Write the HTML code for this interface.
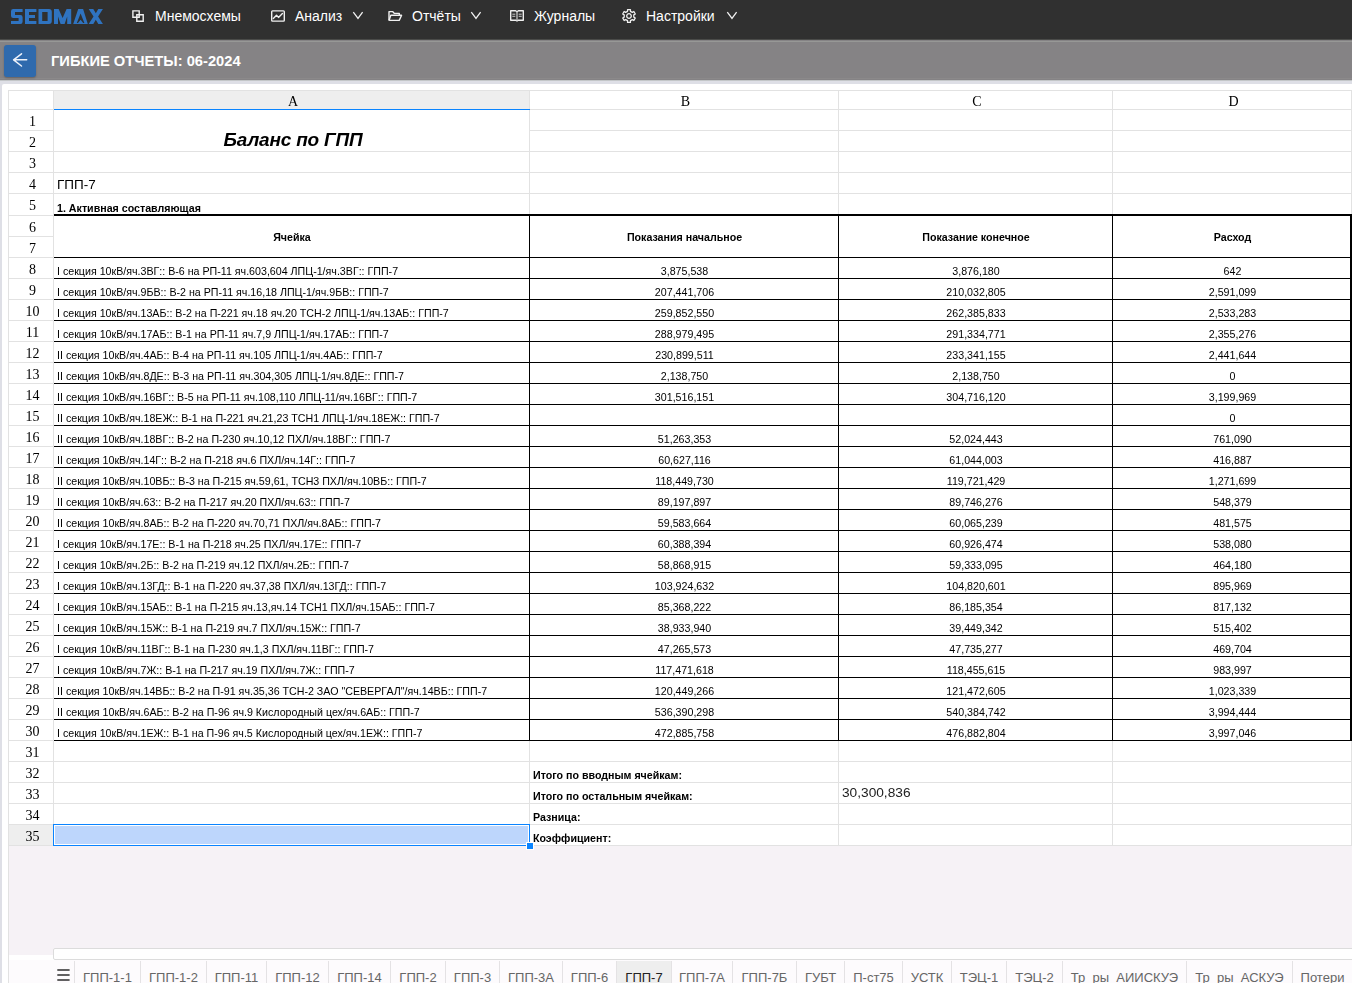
<!DOCTYPE html>
<html><head><meta charset="utf-8">
<style>
html,body{margin:0;padding:0}
body{width:1352px;height:983px;overflow:hidden;position:relative;background:#dedfe6;font-family:"Liberation Sans",sans-serif}
.nav{position:absolute;left:0;top:0;width:1352px;height:39px;background:#303030}
.nav .it{position:absolute;top:0;height:39px;line-height:33px;color:#fff;font-size:14px;white-space:nowrap}
.nav svg{position:absolute}
.tbar{position:absolute;left:0;top:39px;width:1352px;height:41px;background:#858385}
.tbar .hi{position:absolute;left:0;top:2px;width:100%;height:1px;background:#979896}
.tbar .sh{position:absolute;left:0;top:0;width:100%;height:1px;background:#4a4b49}
.tbar .lo{position:absolute;left:0;top:39px;width:100%;height:1px;background:#8b898a}
.tr{position:absolute;left:0;top:80px;width:1352px;height:1px;background:#c3c6c8}
.back{position:absolute;left:4px;top:45px;width:32px;height:32px;background:#2f6aad;border-radius:3px;box-shadow:0 1px 2px rgba(0,0,0,.25)}
.ttl{position:absolute;left:51px;top:41px;height:40px;line-height:41px;color:#fff;font-weight:bold;font-size:14.7px;white-space:nowrap}
.card{position:absolute;left:2px;top:84px;width:1360px;height:920px;background:#fff;border-radius:2px}
.body{position:absolute;left:9px;top:846px;width:1343px;height:109px;background:#f6f2f6}
.gw{position:absolute;left:0;top:0;width:1352px;height:983px;will-change:transform}
.hl{position:absolute;height:1px;background:#e2e2e2}
.vl{position:absolute;width:1px;background:#e2e2e2}
.bk{position:absolute;background:#000}
.ch{position:absolute;top:90px;height:20px;line-height:23px;text-align:center;font-family:"Liberation Serif",serif;font-size:14px;color:#000}
.rn{position:absolute;left:10px;width:45px;text-align:center;font-family:"Liberation Serif",serif;font-size:14px;color:#000;line-height:25px}
.t{position:absolute;font-size:10.66px;height:20px;line-height:20px;color:#000;white-space:nowrap}
.t.b{font-weight:bold}
.t.c{text-align:center;margin-left:1px}
.t.mid{text-align:center;margin-left:1px}
.title{position:absolute;height:26px;line-height:26px;text-align:center;font-size:19px;font-weight:bold;font-style:italic;white-space:nowrap}
.gpp{position:absolute;height:20px;line-height:18px;font-size:13.5px;white-space:nowrap}
.num2{position:absolute;height:20px;line-height:14px;font-size:13.7px;color:#222;white-space:nowrap}
.tabs{position:absolute;left:9px;top:960px;width:1343px;height:23px;background:#fdfbfd}
.sb{position:absolute;left:53px;top:948px;width:1310px;height:10px;background:#fff;border:1px solid #dcdcdc;border-radius:2px}
.tab{position:absolute;top:961px;height:30px;line-height:34px;text-align:center;font-size:13px;color:#666;border-left:1px solid #e4e2e4;box-sizing:border-box;white-space:nowrap}
.tab.act{background:#eeeeee;color:#222}
</style></head><body>
<div class="nav">
  <svg style="left:0;top:0" width="760" height="39" viewBox="0 0 760 39">
    <g fill="#2f73c0">
      <path d="M13.2 9H22.6V12H15V15H20.4Q22.6 15 22.6 17.2V21.8Q22.6 24 20.4 24H11V21H18.6V18H13.2Q11 18 11 15.8V11.2Q11 9 13.2 9Z"/>
      <path d="M25 9H36.4V12H29V15H35V18H29V21H36.4V24H25Z"/>
      <path d="M38.5 9H49Q51.8 9 51.8 12V21Q51.8 24 49 24H38.5ZM42.2 12V21H47.6V12Z" fill-rule="evenodd"/>
      <path d="M54 9H58.6L62.6 18L66.6 9H71.2V24H67.2V16.5L64.6 24H60.6L58 16.5V24H54Z"/>
      <path d="M73.2 24L78.2 9H83.1L87.8 24ZM80.6 13.4L76.8 23H78L80.6 19.8L83.2 23H84.4Z" fill-rule="evenodd"/>
      <path d="M88.7 9H93.3L95.8 13.3L98.3 9H102.9L98.1 16.5L102.9 24H98.3L95.8 19.7L93.3 24H88.7L93.5 16.5Z"/>
    </g>
    <g fill="none" stroke="#f0f0f0" stroke-width="1.4">
      <path d="M132.9 10.9H139.2V17.3H132.9Z"/>
      <path d="M136.8 14.7H143.2V21.2H136.8Z"/>
      <rect x="271.7" y="10.9" width="12.6" height="10.2" rx="0.8"/>
      <path d="M273.3 18.5L276.5 15.2L278.5 17.4L282.4 13.5" stroke-linecap="round" stroke-linejoin="round"/>
      <path d="M353.3 12.1L358 18.4L362.6 12.1" stroke-width="1.3"/>
      <path d="M471.3 12.1L476 18.4L480.6 12.1" stroke-width="1.3"/>
      <path d="M727.3 12.1L732 18.4L736.6 12.1" stroke-width="1.3"/>
      <path d="M389 20.4V11.6H392.6L394.4 13.4H399.3V15.3" stroke-linejoin="round"/>
      <path d="M389 20.4H399.2L401.6 15.3H390.8L389 20.4" stroke-linejoin="round"/>
      <path d="M510.7 10.8H515.6L517 11.8L518.4 10.8H523.3V20.2H518.4L517 21L515.6 20.2H510.7Z" stroke-linejoin="round"/>
      <path d="M517 11.8V20.6" stroke="#bbb"/>
      <path d="M512.3 14.2H515.3M512.3 16.3H515.3M518.7 14.2H521.7M518.7 16.3H521.7" stroke-width="1" stroke="#ccc"/>
    </g>
    <g transform="translate(629 16)" fill="none" stroke="#f0f0f0" stroke-width="1.3" stroke-linejoin="round">
      <path d="M-1.45 -4.68 L-1.44 -6.44 L1.44 -6.44 L1.45 -4.68 L3.33 -3.59 L4.86 -4.47 L6.30 -1.97 L4.78 -1.09 L4.78 1.09 L6.30 1.97 L4.86 4.47 L3.33 3.59 L1.45 4.68 L1.44 6.44 L-1.44 6.44 L-1.45 4.68 L-3.33 3.59 L-4.86 4.47 L-6.30 1.97 L-4.78 1.09 L-4.78 -1.09 L-6.30 -1.97 L-4.86 -4.47 L-3.33 -3.59Z"/>
      <circle r="2.3"/>
    </g>
  </svg>
  <div class="it" style="left:155px">Мнемосхемы</div>
  <div class="it" style="left:295px">Анализ</div>
  <div class="it" style="left:412px">Отчёты</div>
  <div class="it" style="left:534px">Журналы</div>
  <div class="it" style="left:646px">Настройки</div>
</div>
<div class="tbar"><div class="sh"></div><div class="hi"></div><div class="lo"></div></div><div class="tr"></div>
<div class="back"><svg width="32" height="32" viewBox="0 0 32 32" style="position:absolute;left:0;top:0"><path d="M17.5 8.8L9.6 14.8L17.5 21M9.9 14.8H22.7" fill="none" stroke="#eef2fa" stroke-width="1.5" stroke-linecap="round" stroke-linejoin="round"/></svg></div>
<div class="ttl">ГИБКИЕ ОТЧЕТЫ: 06-2024</div>
<div class="card"></div>
<div class="body"></div>
<div class="gw">
<div class="hl" style="top:90px;left:8px;width:1344px"></div>
<div class="hl" style="top:109px;left:8px;width:1344px"></div>
<div class="hl" style="top:130px;left:8px;width:1344px"></div>
<div class="hl" style="top:151px;left:8px;width:1344px"></div>
<div class="hl" style="top:172px;left:8px;width:1344px"></div>
<div class="hl" style="top:193px;left:8px;width:1344px"></div>
<div class="hl" style="top:215px;left:8px;width:1344px"></div>
<div class="hl" style="top:236px;left:8px;width:1344px"></div>
<div class="hl" style="top:257px;left:8px;width:1344px"></div>
<div class="hl" style="top:278px;left:8px;width:1344px"></div>
<div class="hl" style="top:299px;left:8px;width:1344px"></div>
<div class="hl" style="top:320px;left:8px;width:1344px"></div>
<div class="hl" style="top:341px;left:8px;width:1344px"></div>
<div class="hl" style="top:362px;left:8px;width:1344px"></div>
<div class="hl" style="top:383px;left:8px;width:1344px"></div>
<div class="hl" style="top:404px;left:8px;width:1344px"></div>
<div class="hl" style="top:425px;left:8px;width:1344px"></div>
<div class="hl" style="top:446px;left:8px;width:1344px"></div>
<div class="hl" style="top:467px;left:8px;width:1344px"></div>
<div class="hl" style="top:488px;left:8px;width:1344px"></div>
<div class="hl" style="top:509px;left:8px;width:1344px"></div>
<div class="hl" style="top:530px;left:8px;width:1344px"></div>
<div class="hl" style="top:551px;left:8px;width:1344px"></div>
<div class="hl" style="top:572px;left:8px;width:1344px"></div>
<div class="hl" style="top:593px;left:8px;width:1344px"></div>
<div class="hl" style="top:614px;left:8px;width:1344px"></div>
<div class="hl" style="top:635px;left:8px;width:1344px"></div>
<div class="hl" style="top:656px;left:8px;width:1344px"></div>
<div class="hl" style="top:677px;left:8px;width:1344px"></div>
<div class="hl" style="top:698px;left:8px;width:1344px"></div>
<div class="hl" style="top:719px;left:8px;width:1344px"></div>
<div class="hl" style="top:740px;left:8px;width:1344px"></div>
<div class="hl" style="top:761px;left:8px;width:1344px"></div>
<div class="hl" style="top:782px;left:8px;width:1344px"></div>
<div class="hl" style="top:803px;left:8px;width:1344px"></div>
<div class="hl" style="top:824px;left:8px;width:1344px"></div>
<div class="hl" style="top:845px;left:8px;width:1344px"></div>
<div class="vl" style="left:8px;top:90px;height:893px"></div>
<div class="vl" style="left:53px;top:90px;height:756px"></div>
<div class="vl" style="left:529px;top:90px;height:756px"></div>
<div class="vl" style="left:838px;top:90px;height:756px"></div>
<div class="vl" style="left:1112px;top:90px;height:756px"></div>
<div class="vl" style="left:1351px;top:90px;height:756px"></div>
<div style="position:absolute;left:54px;top:91px;width:475px;height:18px;background:#eeeeee"></div>
<div style="position:absolute;left:54px;top:109px;width:476px;height:1px;background:#0a84ff"></div>
<div style="position:absolute;left:9px;top:825px;width:44px;height:20px;background:#eeeeee"></div>
<div class="ch" style="left:55px;width:476px">A</div>
<div class="ch" style="left:531px;width:309px">B</div>
<div class="ch" style="left:840px;width:274px">C</div>
<div class="ch" style="left:1114px;width:239px">D</div>
<div class="rn" style="top:109px;height:21px">1</div>
<div class="rn" style="top:130px;height:21px">2</div>
<div class="rn" style="top:151px;height:21px">3</div>
<div class="rn" style="top:172px;height:21px">4</div>
<div class="rn" style="top:193px;height:22px">5</div>
<div class="rn" style="top:215px;height:21px">6</div>
<div class="rn" style="top:236px;height:21px">7</div>
<div class="rn" style="top:257px;height:21px">8</div>
<div class="rn" style="top:278px;height:21px">9</div>
<div class="rn" style="top:299px;height:21px">10</div>
<div class="rn" style="top:320px;height:21px">11</div>
<div class="rn" style="top:341px;height:21px">12</div>
<div class="rn" style="top:362px;height:21px">13</div>
<div class="rn" style="top:383px;height:21px">14</div>
<div class="rn" style="top:404px;height:21px">15</div>
<div class="rn" style="top:425px;height:21px">16</div>
<div class="rn" style="top:446px;height:21px">17</div>
<div class="rn" style="top:467px;height:21px">18</div>
<div class="rn" style="top:488px;height:21px">19</div>
<div class="rn" style="top:509px;height:21px">20</div>
<div class="rn" style="top:530px;height:21px">21</div>
<div class="rn" style="top:551px;height:21px">22</div>
<div class="rn" style="top:572px;height:21px">23</div>
<div class="rn" style="top:593px;height:21px">24</div>
<div class="rn" style="top:614px;height:21px">25</div>
<div class="rn" style="top:635px;height:21px">26</div>
<div class="rn" style="top:656px;height:21px">27</div>
<div class="rn" style="top:677px;height:21px">28</div>
<div class="rn" style="top:698px;height:21px">29</div>
<div class="rn" style="top:719px;height:21px">30</div>
<div class="rn" style="top:740px;height:21px">31</div>
<div class="rn" style="top:761px;height:21px">32</div>
<div class="rn" style="top:782px;height:21px">33</div>
<div class="rn" style="top:803px;height:21px">34</div>
<div class="rn" style="top:824px;height:21px">35</div>
<div style="position:absolute;left:54px;top:130px;width:475px;height:1px;background:#fff"></div>
<div style="position:absolute;left:54px;top:236px;width:475px;height:1px;background:#fff"></div>
<div style="position:absolute;left:530px;top:236px;width:308px;height:1px;background:#fff"></div>
<div style="position:absolute;left:839px;top:236px;width:273px;height:1px;background:#fff"></div>
<div style="position:absolute;left:1113px;top:236px;width:238px;height:1px;background:#fff"></div>
<div class="bk" style="left:54px;top:214px;width:1299px;height:2px"></div>
<div class="bk" style="left:54px;top:257px;width:1298px;height:1px"></div>
<div class="bk" style="left:54px;top:278px;width:1298px;height:1px"></div>
<div class="bk" style="left:54px;top:299px;width:1298px;height:1px"></div>
<div class="bk" style="left:54px;top:320px;width:1298px;height:1px"></div>
<div class="bk" style="left:54px;top:341px;width:1298px;height:1px"></div>
<div class="bk" style="left:54px;top:362px;width:1298px;height:1px"></div>
<div class="bk" style="left:54px;top:383px;width:1298px;height:1px"></div>
<div class="bk" style="left:54px;top:404px;width:1298px;height:1px"></div>
<div class="bk" style="left:54px;top:425px;width:1298px;height:1px"></div>
<div class="bk" style="left:54px;top:446px;width:1298px;height:1px"></div>
<div class="bk" style="left:54px;top:467px;width:1298px;height:1px"></div>
<div class="bk" style="left:54px;top:488px;width:1298px;height:1px"></div>
<div class="bk" style="left:54px;top:509px;width:1298px;height:1px"></div>
<div class="bk" style="left:54px;top:530px;width:1298px;height:1px"></div>
<div class="bk" style="left:54px;top:551px;width:1298px;height:1px"></div>
<div class="bk" style="left:54px;top:572px;width:1298px;height:1px"></div>
<div class="bk" style="left:54px;top:593px;width:1298px;height:1px"></div>
<div class="bk" style="left:54px;top:614px;width:1298px;height:1px"></div>
<div class="bk" style="left:54px;top:635px;width:1298px;height:1px"></div>
<div class="bk" style="left:54px;top:656px;width:1298px;height:1px"></div>
<div class="bk" style="left:54px;top:677px;width:1298px;height:1px"></div>
<div class="bk" style="left:54px;top:698px;width:1298px;height:1px"></div>
<div class="bk" style="left:54px;top:719px;width:1298px;height:1px"></div>
<div class="bk" style="left:54px;top:740px;width:1298px;height:1px"></div>
<div class="bk" style="left:529px;top:214px;width:1px;height:527px"></div>
<div class="bk" style="left:838px;top:214px;width:1px;height:527px"></div>
<div class="bk" style="left:1112px;top:214px;width:1px;height:527px"></div>
<div class="bk" style="left:1350px;top:214px;width:2px;height:527px"></div>
<div class="title" style="left:53px;width:476px;top:127px;margin-left:2px;letter-spacing:-0.2px">Баланс по ГПП</div>
<div class="gpp" style="left:57px;top:176px">ГПП-7</div>
<div class="t b" style="left:57px;top:198px">1. Активная составляющая</div>
<div class="t b mid" style="left:53px;width:476px;top:216px;height:42px;line-height:42px">Ячейка</div>
<div class="t b mid" style="left:529px;width:309px;top:216px;height:42px;line-height:42px">Показания начальное</div>
<div class="t b mid" style="left:838px;width:274px;top:216px;height:42px;line-height:42px">Показание конечное</div>
<div class="t b mid" style="left:1112px;width:239px;top:216px;height:42px;line-height:42px">Расход</div>
<div class="t" style="left:57px;top:261px">I секция 10кВ/яч.3ВГ:: В-6 на РП-11 яч.603,604 ЛПЦ-1/яч.3ВГ:: ГПП-7</div>
<div class="t c" style="left:529px;width:309px;top:261px">3,875,538</div>
<div class="t c" style="left:838px;width:274px;top:261px">3,876,180</div>
<div class="t c" style="left:1112px;width:239px;top:261px">642</div>
<div class="t" style="left:57px;top:282px">I секция 10кВ/яч.9БВ:: В-2 на РП-11 яч.16,18 ЛПЦ-1/яч.9БВ:: ГПП-7</div>
<div class="t c" style="left:529px;width:309px;top:282px">207,441,706</div>
<div class="t c" style="left:838px;width:274px;top:282px">210,032,805</div>
<div class="t c" style="left:1112px;width:239px;top:282px">2,591,099</div>
<div class="t" style="left:57px;top:303px">I секция 10кВ/яч.13АБ:: В-2 на П-221 яч.18 яч.20 ТСН-2 ЛПЦ-1/яч.13АБ:: ГПП-7</div>
<div class="t c" style="left:529px;width:309px;top:303px">259,852,550</div>
<div class="t c" style="left:838px;width:274px;top:303px">262,385,833</div>
<div class="t c" style="left:1112px;width:239px;top:303px">2,533,283</div>
<div class="t" style="left:57px;top:324px">I секция 10кВ/яч.17АБ:: В-1 на РП-11 яч.7,9 ЛПЦ-1/яч.17АБ:: ГПП-7</div>
<div class="t c" style="left:529px;width:309px;top:324px">288,979,495</div>
<div class="t c" style="left:838px;width:274px;top:324px">291,334,771</div>
<div class="t c" style="left:1112px;width:239px;top:324px">2,355,276</div>
<div class="t" style="left:57px;top:345px">II секция 10кВ/яч.4АБ:: В-4 на РП-11 яч.105 ЛПЦ-1/яч.4АБ:: ГПП-7</div>
<div class="t c" style="left:529px;width:309px;top:345px">230,899,511</div>
<div class="t c" style="left:838px;width:274px;top:345px">233,341,155</div>
<div class="t c" style="left:1112px;width:239px;top:345px">2,441,644</div>
<div class="t" style="left:57px;top:366px">II секция 10кВ/яч.8ДЕ:: В-3 на РП-11 яч.304,305 ЛПЦ-1/яч.8ДЕ:: ГПП-7</div>
<div class="t c" style="left:529px;width:309px;top:366px">2,138,750</div>
<div class="t c" style="left:838px;width:274px;top:366px">2,138,750</div>
<div class="t c" style="left:1112px;width:239px;top:366px">0</div>
<div class="t" style="left:57px;top:387px">II секция 10кВ/яч.16ВГ:: В-5 на РП-11 яч.108,110 ЛПЦ-11/яч.16ВГ:: ГПП-7</div>
<div class="t c" style="left:529px;width:309px;top:387px">301,516,151</div>
<div class="t c" style="left:838px;width:274px;top:387px">304,716,120</div>
<div class="t c" style="left:1112px;width:239px;top:387px">3,199,969</div>
<div class="t" style="left:57px;top:408px">II секция 10кВ/яч.18ЕЖ:: В-1 на П-221 яч.21,23 ТСН1 ЛПЦ-1/яч.18ЕЖ:: ГПП-7</div>
<div class="t c" style="left:1112px;width:239px;top:408px">0</div>
<div class="t" style="left:57px;top:429px">II секция 10кВ/яч.18ВГ:: В-2 на П-230 яч.10,12 ПХЛ/яч.18ВГ:: ГПП-7</div>
<div class="t c" style="left:529px;width:309px;top:429px">51,263,353</div>
<div class="t c" style="left:838px;width:274px;top:429px">52,024,443</div>
<div class="t c" style="left:1112px;width:239px;top:429px">761,090</div>
<div class="t" style="left:57px;top:450px">II секция 10кВ/яч.14Г:: В-2 на П-218 яч.6 ПХЛ/яч.14Г:: ГПП-7</div>
<div class="t c" style="left:529px;width:309px;top:450px">60,627,116</div>
<div class="t c" style="left:838px;width:274px;top:450px">61,044,003</div>
<div class="t c" style="left:1112px;width:239px;top:450px">416,887</div>
<div class="t" style="left:57px;top:471px">II секция 10кВ/яч.10ВБ:: В-3 на П-215 яч.59,61, ТСН3 ПХЛ/яч.10ВБ:: ГПП-7</div>
<div class="t c" style="left:529px;width:309px;top:471px">118,449,730</div>
<div class="t c" style="left:838px;width:274px;top:471px">119,721,429</div>
<div class="t c" style="left:1112px;width:239px;top:471px">1,271,699</div>
<div class="t" style="left:57px;top:492px">II секция 10кВ/яч.63:: В-2 на П-217 яч.20 ПХЛ/яч.63:: ГПП-7</div>
<div class="t c" style="left:529px;width:309px;top:492px">89,197,897</div>
<div class="t c" style="left:838px;width:274px;top:492px">89,746,276</div>
<div class="t c" style="left:1112px;width:239px;top:492px">548,379</div>
<div class="t" style="left:57px;top:513px">II секция 10кВ/яч.8АБ:: В-2 на П-220 яч.70,71 ПХЛ/яч.8АБ:: ГПП-7</div>
<div class="t c" style="left:529px;width:309px;top:513px">59,583,664</div>
<div class="t c" style="left:838px;width:274px;top:513px">60,065,239</div>
<div class="t c" style="left:1112px;width:239px;top:513px">481,575</div>
<div class="t" style="left:57px;top:534px">I секция 10кВ/яч.17Е:: В-1 на П-218 яч.25 ПХЛ/яч.17Е:: ГПП-7</div>
<div class="t c" style="left:529px;width:309px;top:534px">60,388,394</div>
<div class="t c" style="left:838px;width:274px;top:534px">60,926,474</div>
<div class="t c" style="left:1112px;width:239px;top:534px">538,080</div>
<div class="t" style="left:57px;top:555px">I секция 10кВ/яч.2Б:: В-2 на П-219 яч.12 ПХЛ/яч.2Б:: ГПП-7</div>
<div class="t c" style="left:529px;width:309px;top:555px">58,868,915</div>
<div class="t c" style="left:838px;width:274px;top:555px">59,333,095</div>
<div class="t c" style="left:1112px;width:239px;top:555px">464,180</div>
<div class="t" style="left:57px;top:576px">I секция 10кВ/яч.13ГД:: В-1 на П-220 яч.37,38 ПХЛ/яч.13ГД:: ГПП-7</div>
<div class="t c" style="left:529px;width:309px;top:576px">103,924,632</div>
<div class="t c" style="left:838px;width:274px;top:576px">104,820,601</div>
<div class="t c" style="left:1112px;width:239px;top:576px">895,969</div>
<div class="t" style="left:57px;top:597px">I секция 10кВ/яч.15АБ:: В-1 на П-215 яч.13,яч.14 ТСН1 ПХЛ/яч.15АБ:: ГПП-7</div>
<div class="t c" style="left:529px;width:309px;top:597px">85,368,222</div>
<div class="t c" style="left:838px;width:274px;top:597px">86,185,354</div>
<div class="t c" style="left:1112px;width:239px;top:597px">817,132</div>
<div class="t" style="left:57px;top:618px">I секция 10кВ/яч.15Ж:: В-1 на П-219 яч.7 ПХЛ/яч.15Ж:: ГПП-7</div>
<div class="t c" style="left:529px;width:309px;top:618px">38,933,940</div>
<div class="t c" style="left:838px;width:274px;top:618px">39,449,342</div>
<div class="t c" style="left:1112px;width:239px;top:618px">515,402</div>
<div class="t" style="left:57px;top:639px">I секция 10кВ/яч.11ВГ:: В-1 на П-230 яч.1,3 ПХЛ/яч.11ВГ:: ГПП-7</div>
<div class="t c" style="left:529px;width:309px;top:639px">47,265,573</div>
<div class="t c" style="left:838px;width:274px;top:639px">47,735,277</div>
<div class="t c" style="left:1112px;width:239px;top:639px">469,704</div>
<div class="t" style="left:57px;top:660px">I секция 10кВ/яч.7Ж:: В-1 на П-217 яч.19 ПХЛ/яч.7Ж:: ГПП-7</div>
<div class="t c" style="left:529px;width:309px;top:660px">117,471,618</div>
<div class="t c" style="left:838px;width:274px;top:660px">118,455,615</div>
<div class="t c" style="left:1112px;width:239px;top:660px">983,997</div>
<div class="t" style="left:57px;top:681px">II секция 10кВ/яч.14ВБ:: В-2 на П-91 яч.35,36 ТСН-2 ЗАО "СЕВЕРГАЛ"/яч.14ВБ:: ГПП-7</div>
<div class="t c" style="left:529px;width:309px;top:681px">120,449,266</div>
<div class="t c" style="left:838px;width:274px;top:681px">121,472,605</div>
<div class="t c" style="left:1112px;width:239px;top:681px">1,023,339</div>
<div class="t" style="left:57px;top:702px">II секция 10кВ/яч.6АБ:: В-2 на П-96 яч.9 Кислородный цех/яч.6АБ:: ГПП-7</div>
<div class="t c" style="left:529px;width:309px;top:702px">536,390,298</div>
<div class="t c" style="left:838px;width:274px;top:702px">540,384,742</div>
<div class="t c" style="left:1112px;width:239px;top:702px">3,994,444</div>
<div class="t" style="left:57px;top:723px">I секция 10кВ/яч.1ЕЖ:: В-1 на П-96 яч.5 Кислородный цех/яч.1ЕЖ:: ГПП-7</div>
<div class="t c" style="left:529px;width:309px;top:723px">472,885,758</div>
<div class="t c" style="left:838px;width:274px;top:723px">476,882,804</div>
<div class="t c" style="left:1112px;width:239px;top:723px">3,997,046</div>
<div class="t b" style="left:533px;top:765px">Итого по вводным ячейкам:</div>
<div class="t b" style="left:533px;top:786px">Итого по остальным ячейкам:</div>
<div class="t b" style="left:533px;top:807px">Разница:</div>
<div class="t b" style="left:533px;top:828px">Коэффициент:</div>
<div class="num2" style="left:842px;top:786px">30,300,836</div>
<div style="position:absolute;left:53px;top:824px;width:475px;height:20px;border:1px solid #0a84ff;background:#fff"></div>
<div style="position:absolute;left:55px;top:826px;width:473px;height:18px;background:#bdd6fc"></div>
<div style="position:absolute;left:526px;top:842px;width:6px;height:6px;background:#0a84ff;border:1px solid #fff"></div>
</div>
<div class="tabs"></div>
<div class="sb"></div>
<svg style="position:absolute;left:55px;top:966px" width="18" height="17" viewBox="0 0 18 17"><path d="M2.3 4H14.6M2.3 9H14.6M2.3 14H14.6" stroke="#2e2e2e" stroke-width="1.7"/></svg>
<div class="tab" style="left:74px;width:66px">ГПП-1-1</div>
<div class="tab" style="left:140px;width:66px">ГПП-1-2</div>
<div class="tab" style="left:206px;width:60px">ГПП-11</div>
<div class="tab" style="left:266px;width:62px">ГПП-12</div>
<div class="tab" style="left:328px;width:62px">ГПП-14</div>
<div class="tab" style="left:390px;width:55px">ГПП-2</div>
<div class="tab" style="left:445px;width:54px">ГПП-3</div>
<div class="tab" style="left:499px;width:63px">ГПП-3А</div>
<div class="tab" style="left:562px;width:54px">ГПП-6</div>
<div class="tab act" style="left:616px;width:55px">ГПП-7</div>
<div class="tab" style="left:671px;width:61px">ГПП-7А</div>
<div class="tab" style="left:732px;width:64px">ГПП-7Б</div>
<div class="tab" style="left:796px;width:48px">ГУБТ</div>
<div class="tab" style="left:844px;width:58px">П-ст75</div>
<div class="tab" style="left:902px;width:49px">УСТК</div>
<div class="tab" style="left:951px;width:55px">ТЭЦ-1</div>
<div class="tab" style="left:1006px;width:56px">ТЭЦ-2</div>
<div class="tab" style="left:1062px;width:124px">Тр_ры_АИИСКУЭ</div>
<div class="tab" style="left:1186px;width:106px">Тр_ры_АСКУЭ</div>
<div class="tab" style="left:1292px;width:60px">Потери</div>
</body></html>
